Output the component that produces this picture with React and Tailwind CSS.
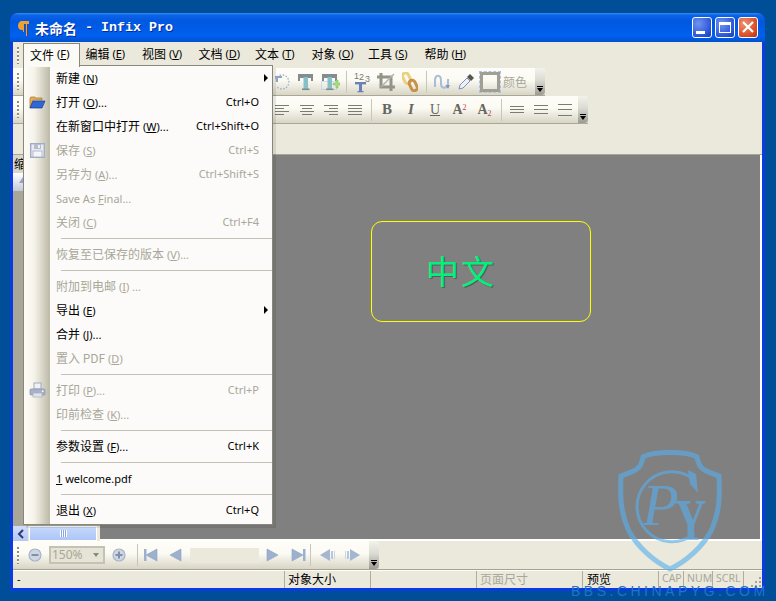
const cjk = "font-['Noto_Sans_CJK_SC',sans-serif]";
const latin = "font-['Noto_Sans','Noto_Sans_CJK_SC',sans-serif]";

const menus = [
  ['文件', 'F'],
  ['编辑', 'E'],
  ['视图', 'V'],
  ['文档', 'D'],
  ['文本', 'T'],
  ['对象', 'O'],
  ['工具', 'S'],
  ['帮助', 'H'],
];

const fileMenu = [
  { label: '新建', k: 'N', arrow: true },
  { label: '打开', k: 'O', dots: true, short: 'Ctrl+O', icon: 'open' },
  { label: '在新窗口中打开', k: 'W', dots: true, short: 'Ctrl+Shift+O' },
  { label: '保存', k: 'S', off: true, short: 'Ctrl+S', icon: 'save' },
  { label: '另存为', k: 'A', dots: true, off: true, short: 'Ctrl+Shift+S' },
  { final: true, off: true },
  { label: '关闭', k: 'C', off: true, short: 'Ctrl+F4' },
  { sep: true },
  { label: '恢复至已保存的版本', k: 'V', dots: true, off: true },
  { sep: true },
  { label: '附加到电邮', k: 'I', tail: ' ...', off: true },
  { label: '导出', k: 'E', arrow: true },
  { label: '合并', k: 'J', dots: true },
  { label: '置入 PDF', k: 'D', off: true },
  { sep: true },
  { label: '打印', k: 'P', dots: true, off: true, short: 'Ctrl+P', icon: 'print' },
  { label: '印前检查', k: 'K', dots: true, off: true },
  { sep: true },
  { label: '参数设置', k: 'F', dots: true, short: 'Ctrl+K' },
  { sep: true },
  { recent: true },
  { sep: true },
  { label: '退出', k: 'X', short: 'Ctrl+Q' },
];

function Gripper() {
  return <div className="w-[2px] h-[17px] bg-[repeating-linear-gradient(180deg,#8f8d7e_0_2px,#ffffff_2px_3px,transparent_3px_4px)]" />;
}

function Sep() {
  return <div className="w-[8px] h-[22px] flex justify-center shrink-0"><div className="w-px h-full bg-[#c9c6b6]" /></div>;
}

function Btn({ w = 'w-6', children }) {
  return <div className={`${w} h-6 flex items-center justify-center shrink-0`}>{children}</div>;
}

function Chevron() {
  return (
    <div className="ml-auto w-[10px] h-full rounded-r-[4px] bg-[linear-gradient(180deg,#f2f1ea,#dcdbd3_45%,#9c9b92)] flex flex-col items-center justify-end pb-[3px] shrink-0">
      <div className="w-[6px] h-px bg-black mb-px" />
      <div className="w-0 h-0 border-x-[3px] border-x-transparent border-t-[4px] border-t-black" />
    </div>
  );
}

function Lines({ rows, c = '#7c7b70' }) {
  return (
    <svg width="16" height="14" viewBox="0 0 16 14">
      {rows.map((r, i) => <rect key={i} x={r[0]} y={r[1]} width={r[2]} height="1" fill={c} />)}
    </svg>
  );
}

function TIcon({ plus }) {
  return (
    <svg width="20" height="20" viewBox="0 0 20 20">
      {plus && <rect x="1.5" y="9.5" width="15" height="8" fill="none" stroke="#a9c0ea" strokeDasharray="1 1" />}
      <rect x="2" y="2" width="15" height="4" fill="#828d92" />
      <rect x="2" y="2" width="2" height="7" fill="#828d92" />
      <rect x="15" y="2" width="2" height="7" fill="#828d92" />
      <rect x="7.5" y="5" width="4.5" height="13" fill="#86c0c8" />
      <rect x="6" y="16.5" width="7.5" height="1.6" fill="#7d8d92" />
      {plus && <path d="M13 11h3V8h2v3h2v2h-2v3h-2v-3h-3z" fill="#a6e07e" stroke="#7fb65c" strokeWidth=".5" />}
    </svg>
  );
}

function Undo() {
  return (
    <svg width="18" height="18" viewBox="0 0 18 18">
      <path d="M4 4 A7 7 0 1 1 4 14" fill="none" stroke="#9fb2d0" strokeWidth="1.4" strokeDasharray="1.5 1.5" />
      <path d="M2 3h7v2H5v4H3z" fill="#8fa5c8" />
    </svg>
  );
}

function T123() {
  return (
    <svg width="20" height="22" viewBox="0 0 20 22">
      <rect x="3" y="11" width="11" height="2.4" fill="#6d7fb8" />
      <rect x="7" y="11" width="3" height="10" fill="#6d7fb8" />
      <rect x="5.5" y="20" width="6" height="1.3" fill="#6d7fb8" />
      <text x="2" y="8" fontSize="9" fontFamily="'Liberation Sans', sans-serif" fill="#7a796e">1</text>
      <text x="7" y="9" fontSize="9" fontFamily="'Liberation Sans', sans-serif" fill="#7a796e">2</text>
      <text x="13" y="11" fontSize="9" fontFamily="'Liberation Sans', sans-serif" fill="#7a796e">3</text>
    </svg>
  );
}

function Crop() {
  return (
    <svg width="20" height="20" viewBox="0 0 20 20">
      <path d="M5 1v14h14M1 5h14v14" fill="none" stroke="#94938a" strokeWidth="3" />
      <path d="M5 15 18 2" stroke="#b3b2a8" strokeWidth="1.5" />
    </svg>
  );
}

function Link() {
  return (
    <svg width="16" height="20" viewBox="0 0 16 20">
      <rect x="1.5" y="1" width="6" height="11" rx="3" fill="none" stroke="#ecd07e" strokeWidth="3" transform="rotate(-25 4 6)" />
      <rect x="8" y="8" width="6" height="11" rx="3" fill="none" stroke="#c8914a" strokeWidth="3" transform="rotate(-25 11 13)" />
    </svg>
  );
}

function Curve() {
  return (
    <svg width="18" height="18" viewBox="0 0 18 18">
      <path d="M2 14V8c0-7 6-7 6 0v3c0 5 6 5 7 0V6" fill="none" stroke="#a9bcd8" strokeWidth="2" />
      <path d="M12.5 12l2.5 4 2-4" fill="#7f96bc" />
    </svg>
  );
}

function Dropper() {
  return (
    <svg width="18" height="18" viewBox="0 0 18 18">
      <path d="M2 16l1-4 7-7 3 3-7 7z" fill="#eef0f8" stroke="#7f8fbc" />
      <path d="M10 4l3-3 4 4-3 3z" fill="#55564e" />
    </svg>
  );
}

function Tri({ dir, bar }) {
  const c = '#9db1cf';
  return (
    <svg width="16" height="14" viewBox="0 0 16 14">
      {dir === 'l'
        ? <path d="M14 1v12L3 7z" fill={c} stroke="#8ba1c2" strokeWidth=".6" />
        : <path d="M2 1v12l11-6z" fill={c} stroke="#8ba1c2" strokeWidth=".6" />}
      {bar && <rect x={dir === 'l' ? 1 : 13} y="1" width="2.5" height="12" fill={c} />}
    </svg>
  );
}

function Nav({ dir }) {
  return (
    <svg width="16" height="14" viewBox="0 0 16 14">
      {dir === 'l'
        ? <><path d="M0 7l10-6v12z" fill="#a3b6d2" /><rect x="11" y="3" width="2" height="8" fill="#b9c7dc" /><rect x="14" y="3" width="1" height="8" fill="#c9d4e4" /></>
        : <><rect x="1" y="3" width="1" height="8" fill="#c9d4e4" /><rect x="3" y="3" width="2" height="8" fill="#b9c7dc" /><path d="M16 7L6 1v12z" fill="#a3b6d2" /></>}
    </svg>
  );
}

function Zoom({ plus }) {
  return (
    <svg width="14" height="14" viewBox="0 0 14 14">
      <circle cx="7" cy="7" r="6" fill="#cfd6e2" stroke="#a7b4c8" strokeWidth="1.2" />
      <rect x="3.5" y="6" width="7" height="2" fill="#7f90ac" />
      {plus && <rect x="6" y="3.5" width="2" height="7" fill="#7f90ac" />}
    </svg>
  );
}

function MenuIcon({ name }) {
  if (name === 'open') return (
    <svg width="17" height="14" viewBox="0 0 17 14">
      <path d="M1 13V3l1-1h4l1 1h6v2H4L1 13z" fill="#e8ad5a" stroke="#a5732c" strokeWidth=".7" />
      <path d="M1 13l3-7h12l-3 7z" fill="#2f66d8" stroke="#1a3c90" strokeWidth=".7" />
    </svg>
  );
  if (name === 'save') return (
    <svg width="15" height="15" viewBox="0 0 15 15">
      <rect x=".7" y=".7" width="13.6" height="13.6" fill="#e9ebf3" stroke="#a3acc4" strokeWidth="1.4" />
      <rect x="4" y="1" width="7" height="5" fill="#b4bdd2" />
      <rect x="8" y="2" width="2" height="3" fill="#f0f1f5" />
      <rect x="3" y="8" width="9" height="6" fill="#f5f5f5" stroke="#a3acc4" strokeWidth=".8" />
    </svg>
  );
  return (
    <svg width="17" height="16" viewBox="0 0 17 16">
      <rect x="5" y="1" width="7" height="6" fill="#eef1f6" stroke="#a3acc0" />
      <rect x="1" y="7" width="15" height="6" rx="1" fill="#a9b3c8" stroke="#8490a8" strokeWidth=".7" />
      <rect x="4" y="11" width="9" height="4" fill="#dfe3ea" stroke="#a3acc0" strokeWidth=".7" />
      <rect x="13" y="8.5" width="1.5" height="1.5" fill="#fff" />
    </svg>
  );
}

function Accel({ k, dots, tail }) {
  return (
    <span className={`${latin} text-[11px]`}>
      {' '}(<span className="underline">{k}</span>){dots ? '...' : ''}{tail || ''}
    </span>
  );
}

function MenuRow({ item }) {
  if (item.sep) {
    return <div className="h-2 flex items-center pl-[37px]"><div className="w-full h-px bg-[#c5c2b8]" /></div>;
  }
  const color = item.off ? 'text-[#a8a79a]' : 'text-black';
  return (
    <div className={`h-6 flex items-center ${color}`}>
      <div className="w-[26px] flex justify-center shrink-0">{item.icon && <MenuIcon name={item.icon} />}</div>
      <div className="pl-[6px] pb-[2px] whitespace-pre">
        {item.final && <span className={`${latin} text-[11px]`}>Save As <span className="underline">F</span>inal...</span>}
        {item.recent && <span className={`${latin} text-[11px]`}><span className="underline">1</span> welcome.pdf</span>}
        {item.label && <span className={`${cjk} text-[12px]`}>{item.label}</span>}
        {item.label && <Accel k={item.k} dots={item.dots} tail={item.tail} />}
      </div>
      {item.short && <span className={`${latin} text-[11px] ml-auto mr-[13px]`}>{item.short}</span>}
      {item.arrow && <div className="ml-auto mr-[4px] w-0 h-0 border-y-[4px] border-y-transparent border-l-[4px] border-l-black" />}
    </div>
  );
}

function FileMenu() {
  return (
    <div className="absolute left-[23px] top-[65px] w-[250px] h-[460px] z-20 border border-[#8a867a] bg-[#fcfbf9] shadow-[3px_3px_0_rgba(0,0,0,0.09)] flex">
      <div className="absolute left-0 top-0 bottom-0 w-[26px] bg-[linear-gradient(90deg,#fdfcf7,#f5f3e9_40%,#bcb9a7)]" />
      <div className="relative w-full">
        {fileMenu.map((item, i) => <MenuRow key={i} item={item} />)}
      </div>
    </div>
  );
}

function Toolbar({ w, pl, children }) {
  return (
    <div className={`${w} h-[28px] shrink-0 flex items-center border-b border-[#aaa795] rounded-tr-[4px] bg-[linear-gradient(180deg,#fefdf8,#fbfaf3_45%,#d8d5c5)]`}>
      <div className="pl-[4px]"><Gripper /></div>
      <div className={`${pl} flex items-center h-full w-full`}>{children}</div>
    </div>
  );
}

function Watermark() {
  return (
    <svg className="absolute left-[618px] top-[450px] z-30 pointer-events-none" width="104" height="123" viewBox="0 0 104 123">
      <g opacity=".62">
        <path d="M52 2.5C42 2.5 30 4 25 7c-1 6-3 10-6 12-4 3-11 5-16 7-1 24 0 38 8 55 8 15 24 30 41 38 17-8 33-23 41-38 8-17 9-31 8-55-5-2-12-4-16-7-3-2-5-6-6-12-5-3-17-4.5-27-4.5z" fill="none" stroke="#58b0ee" strokeWidth="5" />
        <path d="M74 28A35 35 0 1 0 76 84" fill="none" stroke="#58b0ee" strokeWidth="3" />
        <path d="M70 20l8 4 2 19-8-9z" fill="#58b0ee" />
        <text x="24" y="75" fontSize="60" fontStyle="italic" fontFamily="'Liberation Serif', serif" fill="#58b0ee">P</text>
        <text x="0" y="0" fontSize="60" fontWeight="700" fontFamily="'Liberation Serif', serif" fill="#58b0ee" transform="translate(57 90) scale(.72 1)">Y</text>
      </g>
    </svg>
  );
}

function Status({ w, text, cls = '' }) {
  return (
    <div className={`${w} h-full shrink-0 border-l border-[#b0ad9c] pl-[3px] pb-[1px] flex items-center overflow-hidden ${cls}`}>{text}</div>
  );
}

function TitleButton({ cls, children }) {
  return (
    <div className={`w-[20px] h-[21px] rounded-[3px] border border-white flex items-center justify-center relative ${cls}`}>{children}</div>
  );
}

export default function App() {
  const blue = 'bg-[radial-gradient(circle_at_30%_30%,#6f94f0,#2a54d8_70%,#1a3cb0)]';
  return (
    <div className="relative w-[776px] h-[601px] overflow-hidden bg-[#004e98] pt-[13px] pl-[10px]">
      <div className="w-[755px] h-[578px] flex flex-col rounded-t-[8px] overflow-hidden bg-[#0a3ce0]">
        {/* title bar */}
        <div className="h-[29px] shrink-0 flex items-center pl-[8px] pr-[7px] bg-[linear-gradient(180deg,#2e8cf2_0,#0c62e8_8%,#0058e0_30%,#0060ee_80%,#0050cc_100%)]">
          <svg width="12" height="17" viewBox="0 0 12 17" className="mt-px">
            <path d="M4 1h7v3h-1v12H8V4H7v8H5v-2H4C1 10 0 8 0 5.5 0 3 2 1 4 1z" fill="#f0a030" />
            <path d="M9 4h1v12H9zM6 4h1v8H6z" fill="#3a4a80" />
          </svg>
          <div className="ml-[5px] pt-px flex items-center text-white font-bold [text-shadow:1px_1px_0_#0a2a9a] whitespace-pre">
            <span className={`${cjk} text-[14px]`}>未命名</span>
            <span className="font-['Liberation_Mono',monospace] text-[13.33px]"> - Infix Pro</span>
          </div>
          <div className="ml-auto flex gap-[3px] pb-[1px]">
            <TitleButton cls={blue}><div className="absolute left-[3px] bottom-[3px] w-[9px] h-[3px] bg-white" /></TitleButton>
            <TitleButton cls={blue}><div className="w-[12px] h-[11px] border border-white border-t-[3px]" /></TitleButton>
            <TitleButton cls="bg-[radial-gradient(circle_at_30%_30%,#f09070,#d8502a_65%,#b03010)]">
              <svg width="12" height="12" viewBox="0 0 12 12"><path d="M1 1l10 10M11 1L1 11" stroke="#fff" strokeWidth="2.2" /></svg>
            </TitleButton>
          </div>
        </div>

        {/* client area */}
        <div className="mx-[3px] h-[546px] shrink-0 flex flex-col bg-[#ebe9dc]">
          <div className="h-[26px] shrink-0 flex items-center pl-[4px]">
            <Gripper />
            <div className="ml-[4px] flex h-[24px]">
              {menus.map(([name, k], i) => (
                <div key={name} className={`w-[56.5px] flex items-center whitespace-pre text-black pb-[2px] ${i === 0 ? 'relative z-30 h-[24px] border border-b-0 border-[#8a867a] bg-[#fbfaf4] pl-[6px]' : 'pl-[6px]'}`}>
                  <span className={`${cjk} text-[12px]`}>{name}</span>
                  <Accel k={k} />
                </div>
              ))}
            </div>
          </div>

          <Toolbar w="w-[532px]" pl="pl-[251px]">
            <Btn><Undo /></Btn>
            <Btn><TIcon /></Btn>
            <Btn><TIcon plus /></Btn>
            <Sep />
            <Btn><T123 /></Btn>
            <Btn><Crop /></Btn>
            <Btn><Link /></Btn>
            <Sep />
            <Btn><Curve /></Btn>
            <Btn><Dropper /></Btn>
            <div className="w-[20px] h-[20px] shrink-0 ml-[2px] border-[3px] border-[#a09f93] outline-1 outline-dashed outline-[#aebfe8]" />
            <span className={`${cjk} text-[12px] text-[#a9a798] ml-[3px]`}>颜色</span>
            <Chevron />
          </Toolbar>

          <Toolbar w="w-[575px]" pl="pl-[252px]">
            <Btn><Lines rows={[[0, 2, 14], [0, 5, 9], [0, 8, 14], [0, 11, 9]]} /></Btn>
            <Btn><Lines rows={[[1, 2, 14], [3, 5, 10], [1, 8, 14], [3, 11, 10]]} /></Btn>
            <Btn><Lines rows={[[1, 2, 14], [6, 5, 9], [1, 8, 14], [6, 11, 9]]} /></Btn>
            <Btn><Lines rows={[[1, 2, 14], [1, 5, 14], [1, 8, 14], [1, 11, 14]]} /></Btn>
            <Sep />
            <Btn><span className="font-['Liberation_Serif',serif] font-bold text-[15px] text-[#67665c]">B</span></Btn>
            <Btn><span className="font-['Liberation_Serif',serif] font-bold italic text-[15px] text-[#67665c]">I</span></Btn>
            <Btn w="w-[24px]"><span className="font-['Liberation_Serif',serif] underline text-[14px] text-[#67665c]">U</span></Btn>
            <Btn w="w-[25px]">
              <span className="font-['Liberation_Serif',serif] font-bold text-[14px] text-[#67665c]">A<sup className="text-[8px] text-[#c04040] font-normal">2</sup></span>
            </Btn>
            <Btn w="w-[25px]">
              <span className="font-['Liberation_Serif',serif] font-bold text-[14px] text-[#67665c]">A<sub className="text-[8px] text-[#c04040] font-normal">2</sub></span>
            </Btn>
            <Sep />
            <Btn><Lines rows={[[1, 3, 14], [1, 6, 14], [1, 9, 14]]} /></Btn>
            <Btn><Lines rows={[[1, 2, 14], [1, 6, 14], [1, 10, 14]]} /></Btn>
            <Btn><Lines rows={[[1, 1, 14], [1, 6, 14], [1, 12, 14]]} /></Btn>
            <Chevron />
          </Toolbar>

          <div className="h-[30px] shrink-0" />

          {/* work area */}
          <div className="h-[387px] shrink-0 flex border-t border-[#a8a697]">
            <div className="w-[87px] shrink-0 flex flex-col bg-[#a9a898]">
              <div className={`h-[18px] shrink-0 pl-[1px] overflow-hidden text-black ${cjk} text-[12px] leading-[18px] bg-[#d8d6c8]`}>缩略图</div>
              <div className="h-[18px] shrink-0 bg-[linear-gradient(180deg,#ffffff,#c4c9d6)] pl-[6px] pt-[4px]">
                <div className="w-0 h-0 border-x-[4px] border-x-transparent border-b-[6px] border-b-[#8ea4cc]" />
              </div>
              <div className="flex-1" />
              <div className="h-[15px] shrink-0 flex bg-[#ebe9dc]">
                <div className="w-[15px] bg-[linear-gradient(180deg,#d0dcfa,#b4c8f4)] flex items-center justify-center text-[#2a3a78]">
                  <svg width="8" height="10" viewBox="0 0 8 10"><path d="M6 1L2 5l4 4" fill="none" stroke="currentColor" strokeWidth="2" /></svg>
                </div>
                <div className="ml-[1px] w-[68px] border border-white bg-[linear-gradient(180deg,#c6d8fc,#acc6f6)] flex items-center justify-center">
                  <div className="w-[7px] h-[7px] bg-[repeating-linear-gradient(90deg,#ffffff_0_1px,#8aa4e0_1px_2px)]" />
                </div>
              </div>
            </div>
            <div className="flex-1 relative bg-[#808080] border-r-2 border-b-2 border-white">
              <div className="absolute left-[271px] top-[66px] w-[220px] h-[101px] rounded-[11px] border border-[#ffff00] pl-[54px] pt-[26px]">
                <span className={`${cjk} text-[33px] leading-[44px] tracking-[2px] text-[#00f27c] [text-shadow:1px_1px_0_#5a5a5a]`}>中文</span>
              </div>
            </div>
          </div>

          {/* bottom toolbar */}
          <div className="h-[29px] shrink-0 border-b border-[#a5a290]">
            <div className="w-[366px] h-[28px] flex items-center rounded-tr-[4px] bg-[linear-gradient(180deg,#fefdf8,#fbfaf3_45%,#d8d5c5)]">
              <div className="pl-[4px]"><Gripper /></div>
              <div className="pl-[6px] flex items-center w-full h-full">
                <Btn w="w-[20px]"><Zoom /></Btn>
                <div className={`ml-[4px] w-[56px] h-[18px] shrink-0 border-2 border-[#c4c2b2] bg-[#e6e4d6] flex items-center pl-[1px] ${latin} text-[12px] text-[#a9a798]`}>
                  150%
                  <div className="ml-auto mr-[4px] w-0 h-0 border-x-[3px] border-x-transparent border-t-[4px] border-t-[#8a897c]" />
                </div>
                <Btn w="w-[28px]"><Zoom plus /></Btn>
                <Sep />
                <div className="w-[2px]" />
                <Btn w="w-[16px]"><Tri dir="l" bar /></Btn>
                <div className="w-[8px]" />
                <Btn w="w-[16px]"><Tri dir="l" /></Btn>
                <div className="ml-[7px] w-[69px] h-[15px] shrink-0 bg-[#ebe9dc]" />
                <div className="w-[6px]" />
                <Btn w="w-[16px]"><Tri dir="r" /></Btn>
                <div className="w-[9px]" />
                <Btn w="w-[16px]"><Tri dir="r" bar /></Btn>
                <Sep />
                <div className="w-[6px]" />
                <Btn w="w-[16px]"><Nav dir="l" /></Btn>
                <div className="w-[8px]" />
                <Btn w="w-[16px]"><Nav dir="r" /></Btn>
                <Chevron />
              </div>
            </div>
          </div>

          {/* status bar */}
          <div className="h-[18px] shrink-0 flex items-center text-black border-t border-white">
            <div className={`w-[271px] shrink-0 pl-[4px] ${latin} text-[11px]`}>-</div>
            <Status w="w-[86px]" text="对象大小" cls={`${cjk} text-[12px]`} />
            <Status w="w-[106px]" text="" />
            <Status w="w-[106px]" text="页面尺寸" cls={`${cjk} text-[12px] text-[#a8a79a]`} />
            <Status w="w-[76px]" text="预览" cls={`${cjk} text-[12px] pl-[4px]`} />
            <Status w="w-[25px]" text="CAP" cls={`${latin} text-[10.5px] text-[#a8a79a] pl-[2px]`} />
            <Status w="w-[29px]" text="NUM" cls={`${latin} text-[10.5px] text-[#a8a79a] pl-[2px]`} />
            <Status w="w-[31px]" text="SCRL" cls={`${latin} text-[10.5px] text-[#a8a79a] pl-[2px]`} />
            <div className="h-full flex-1 border-l border-[#b0ad9c] flex items-end justify-end pr-[1px] pb-[1px]">
              <svg width="11" height="11" viewBox="0 0 11 11" fill="#a8a595">
                <rect x="9" y="1" width="2" height="2" />
                <rect x="5" y="5" width="2" height="2" />
                <rect x="9" y="5" width="2" height="2" />
                <rect x="1" y="9" width="2" height="2" />
                <rect x="5" y="9" width="2" height="2" />
                <rect x="9" y="9" width="2" height="2" />
              </svg>
            </div>
          </div>
        </div>
      </div>

      <FileMenu />
      <Watermark />
      <span className="absolute left-[571px] top-[583px] z-30 font-['Liberation_Sans',sans-serif] text-[14px] leading-[16px] tracking-[3.5px] text-[#1f74c6] whitespace-nowrap">BBS.CHINAPYG.COM</span>
    </div>
  );
}
